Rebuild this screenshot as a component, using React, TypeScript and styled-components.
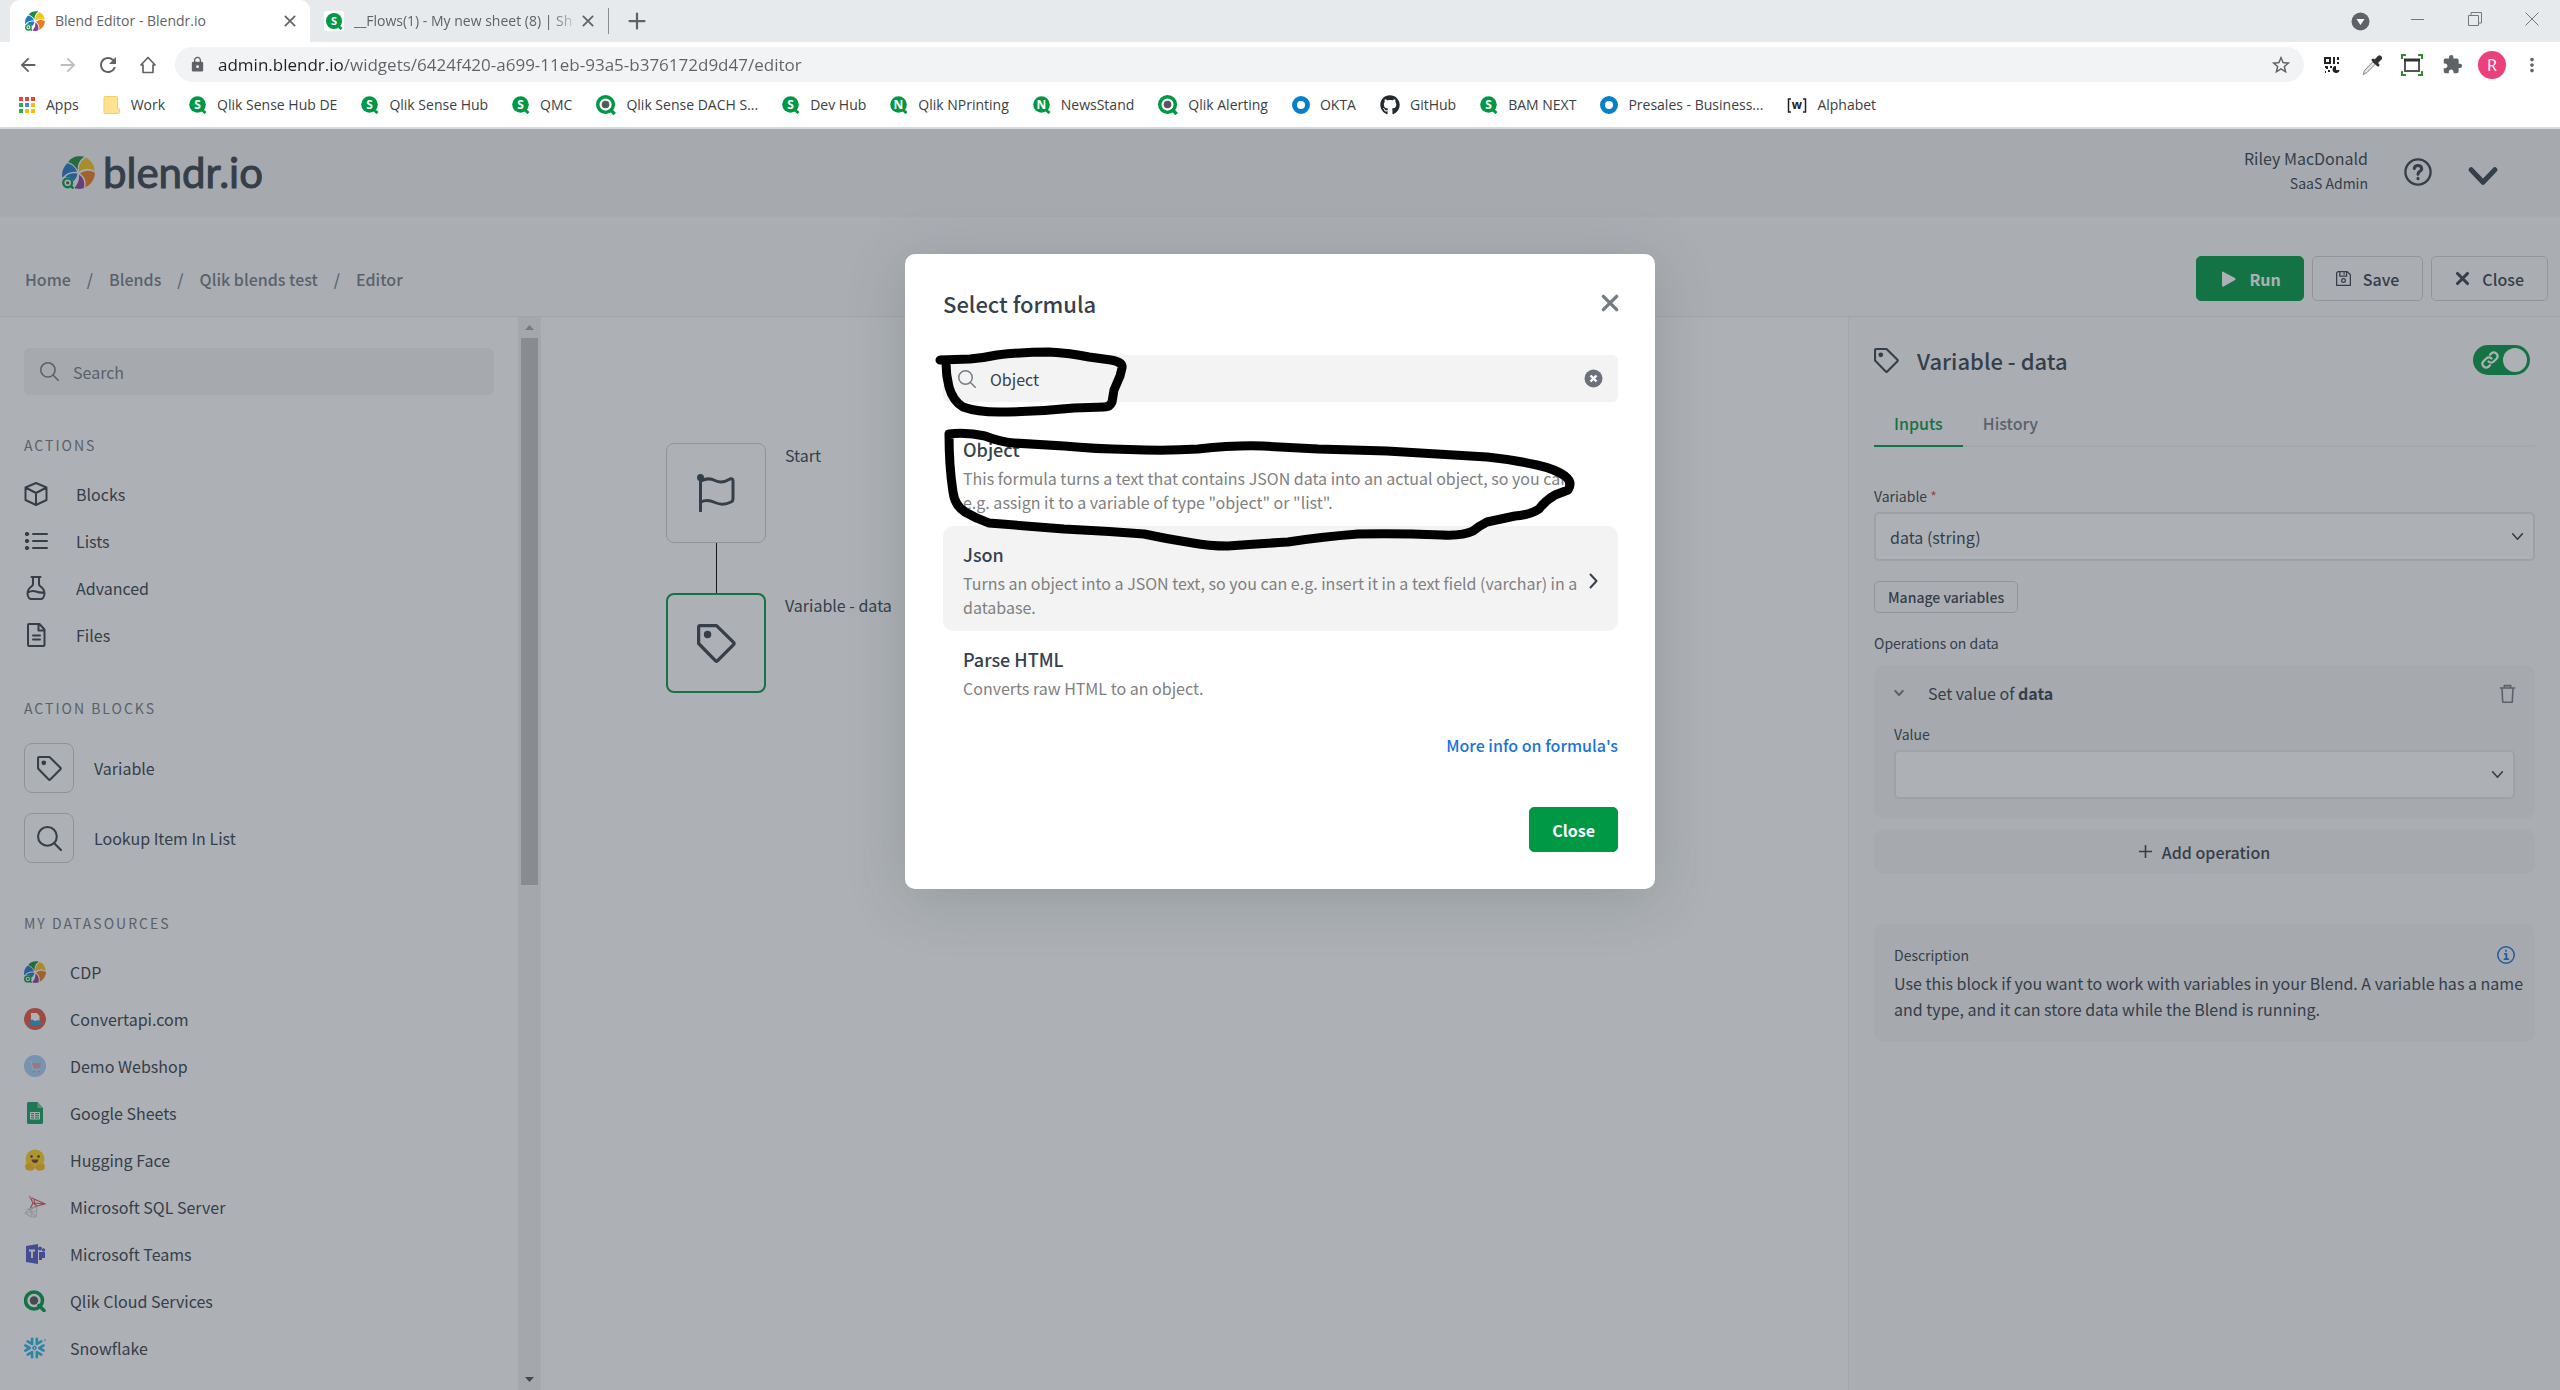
import React from "react";
import styled, { createGlobalStyle, css } from "styled-components";
import { MdArrowBack, MdArrowForward, MdRefresh, MdLock, MdStarBorder, MdExtension, MdMoreVert } from "react-icons/md";
import { FaGithub } from "react-icons/fa";
import { SiSnowflake } from "react-icons/si";

const ui = `"Noto Sans CJK SC", "Noto Sans", sans-serif`;
const chrome = `"Open Sans", "Noto Sans", sans-serif`;
const ink = "#36414c";
const muted = "#757a85";
const green = "#009845";

const Global = createGlobalStyle`
  *, *::before, *::after { box-sizing: border-box; }
  body { margin: 0; background: #fff; }
  button, input, select { font: inherit; color: inherit; margin: 0; }
  a { color: inherit; text-decoration: none; }
  ul { list-style: none; margin: 0; padding: 0; }
  h1, h2, h3, p { margin: 0; font-weight: inherit; font-size: inherit; }
  svg { display: block; flex: none; }
`;

const Page = styled.div`
  height: 100vh;
  display: flex;
  flex-direction: column;
  font-family: ${ui};
  font-size: 16px;
  line-height: 24px;
  color: ${ink};
  overflow: hidden;
`;

/* ---------- Browser window ---------- */

const BrowserTop = styled.header`
  font-family: ${chrome};
  font-size: 14px;
  line-height: 20px;
  color: #3c4043;
  border-bottom: 2px solid #d8dbde;
`;

const TabStrip = styled.div`
  height: 42px;
  display: flex;
  align-items: center;
  padding-left: 10px;
  background: #e6eaed;
`;

const BrowserTab = styled.div<{ $active?: boolean }>`
  height: 42px;
  width: ${(p) => (p.$active ? 300 : 298)}px;
  display: flex;
  align-items: center;
  gap: 10px;
  padding: 0 13px 0 ${(p) => (p.$active ? 15 : 14)}px;
  color: #5f6368;
  background: ${(p) => (p.$active ? "#fff" : "transparent")};
  border-radius: 10px 10px 0 0;
`;

const TabTitle = styled.span<{ $fade?: boolean }>`
  flex: 1;
  white-space: nowrap;
  ${(p) => p.$fade && css`
    margin-right: -8px;
    mask-image: linear-gradient(to right, #000 88%, transparent);
  `}
`;

const PlainButton = styled.button`
  display: grid;
  place-items: center;
  padding: 0;
  border: 0;
  background: none;
  color: inherit;
  cursor: pointer;
`;

const NewTab = styled(PlainButton)`
  width: 56px;
  height: 26px;
  border-left: 1px solid #8a8d91;
  color: #5f6368;
`;

const WindowControls = styled.div`
  margin-left: auto;
  display: flex;
  align-items: center;
  color: #777;
`;

const WindowButton = styled(PlainButton)`
  width: 57px;
  height: 36px;
`;

const AddressRow = styled.div`
  height: 45px;
  display: flex;
  align-items: center;
  padding: 0 8px;
  color: #5f6368;
`;

const NavButton = styled(PlainButton)<{ $dim?: boolean }>`
  width: 40px;
  height: 36px;
  color: ${(p) => (p.$dim ? "#bcbec1" : "#5f6368")};
`;

const AddressBar = styled.label`
  flex: 1;
  height: 35px;
  margin: 0 8px 0 7px;
  padding: 0 12px 0 14px;
  display: flex;
  align-items: center;
  gap: 12px;
  border-radius: 18px;
  background: #f1f3f4;
`;

const AddressInput = styled.input`
  flex: 1;
  min-width: 0;
  border: 0;
  outline: 0;
  padding: 0;
  font-size: 17px;
  line-height: 24px;
  color: #5f6368;
  background: linear-gradient(to right, #202124 126px, #5f6368 126px);
  background-clip: text;
  -webkit-background-clip: text;
  -webkit-text-fill-color: transparent;
`;

const Avatar = styled.span`
  width: 28px;
  height: 28px;
  border-radius: 50%;
  display: grid;
  place-items: center;
  font-size: 16px;
  color: #fff;
  background: #ec407a;
`;

const Bookmarks = styled.nav`
  height: 40px;
  display: flex;
  align-items: center;
  gap: 24px;
  padding: 0 16px 4px;
`;

const Bookmark = styled.a`
  display: flex;
  align-items: center;
  gap: 10px;
  white-space: nowrap;
`;

/* ---------- Application shell ---------- */

const Viewport = styled.div`
  position: relative;
  flex: 1;
  min-height: 0;
  display: flex;
  flex-direction: column;
`;

const AppHeader = styled.header`
  height: 88px;
  display: flex;
  align-items: center;
  padding: 0 62px 2px;
  background: #f4f4f4;
`;

const Logo = styled.a`
  display: flex;
  align-items: center;
  gap: 8px;
  font-family: "Lato", sans-serif;
  font-size: 42px;
  line-height: 44px;
  -webkit-text-stroke: 1px ${ink};
`;

const User = styled.div`
  margin-left: auto;
  padding-bottom: 4px;
  text-align: right;
  font-size: 16px;
  line-height: 25px;
`;

const Small = styled.div`
  font-size: 14px;
  line-height: 24px;
  color: ${ink};
`;

const HelpButton = styled(PlainButton)`
  margin-left: 36px;
`;

const MenuButton = styled(PlainButton)`
  margin: 8px 0 0 36px;
`;

const ActionBar = styled.div`
  height: 100px;
  display: flex;
  align-items: flex-end;
  justify-content: space-between;
  padding: 0 12px 15px 25px;
  border-bottom: 1px solid #e9e9e9;
  background: #fafafa;
`;

const Crumbs = styled.nav`
  height: 45px;
  display: flex;
  align-items: center;
  gap: 16px;
  font-weight: 500;
  color: ${muted};
`;

const Buttons = styled.div`
  display: flex;
  gap: 8px;
`;

const Button = styled.button<{ $primary?: boolean }>`
  height: 45px;
  display: flex;
  align-items: center;
  gap: 12px;
  padding: 0 ${(p) => (p.$primary ? 22 : 23)}px;
  border: 1px solid ${(p) => (p.$primary ? green : "#d3d3d3")};
  border-radius: 5px;
  background: ${(p) => (p.$primary ? green : "transparent")};
  color: ${(p) => (p.$primary ? "#fff" : ink)};
  font-weight: ${(p) => (p.$primary ? 700 : 500)};
  cursor: pointer;
`;

const Workspace = styled.main`
  flex: 1;
  min-height: 0;
  display: grid;
  grid-template-columns: 541px minmax(0, 1fr) 712px;
`;

/* ---------- Sidebar ---------- */

const Sidebar = styled.aside`
  display: flex;
  min-height: 0;
  border-right: 1px solid #f0f0f0;
`;

const SidebarBody = styled.div`
  flex: 1;
  overflow: hidden;
  padding: 31px 24px 0;
`;

const SearchBox = styled.label`
  height: 47px;
  display: flex;
  align-items: center;
  gap: 14px;
  padding: 0 16px;
  border-radius: 6px;
  background: #f3f3f3;
  color: ${muted};
`;

const SearchInput = styled.input`
  flex: 1;
  min-width: 0;
  border: 0;
  outline: 0;
  padding: 0;
  background: none;
  color: ${ink};
  &::placeholder { color: ${muted}; opacity: 1; }
`;

const SectionTitle = styled.h3`
  margin: 40px 0 15px;
  font-size: 14px;
  line-height: 20px;
  letter-spacing: 2px;
  color: ${muted};
`;

const ActionRow = styled.li`
  height: 47px;
  display: flex;
  align-items: center;
  gap: 28px;
`;

const BlockRow = styled(ActionRow)`
  height: 70px;
  gap: 20px;
`;

const SourceRow = styled(ActionRow)`
  gap: 24px;
`;

const BlockTile = styled.span`
  width: 50px;
  height: 50px;
  display: grid;
  place-items: center;
  border: 1px solid #cfcfcf;
  border-radius: 8px;
`;

const ScrollTrack = styled.div`
  width: 22px;
  display: flex;
  flex-direction: column;
  align-items: center;
  background: #f1f1f1;
`;

const ScrollThumb = styled.div`
  width: 17px;
  height: 51%;
  margin-bottom: auto;
  background: #c1c1c1;
`;

const ScrollArrow = styled.div`
  height: 21px;
  display: grid;
  place-items: center;
`;

/* ---------- Canvas ---------- */

const Canvas = styled.section`
  position: relative;
  overflow: hidden;
`;

const Flow = styled.div`
  position: absolute;
  left: 125px;
  top: 126px;
`;

const FlowNode = styled.div`
  display: flex;
  gap: 19px;
`;

const NodeTile = styled.div<{ $selected?: boolean }>`
  width: 100px;
  height: 100px;
  display: grid;
  place-items: center;
  border: ${(p) => (p.$selected ? `2px solid ${green}` : "1px solid #cfcfcf")};
  border-radius: 8px;
`;

const Connector = styled.div`
  width: 1px;
  height: 50px;
  margin-left: 50px;
  background: #000;
`;

/* ---------- Detail panel ---------- */

const Panel = styled.aside`
  padding: 28px 25px 0;
  border-left: 1px solid #f0f0f0;
  background: #fafafa;
`;

const PanelHead = styled.div`
  display: flex;
  align-items: center;
  gap: 18px;
  height: 30px;
  font-size: 22px;
  font-weight: 500;
`;

const Toggle = styled.label`
  margin: 0 5px 0 auto;
  width: 57px;
  height: 30px;
  display: flex;
  align-items: center;
  justify-content: space-between;
  padding: 0 3px 0 8px;
  border-radius: 15px;
  background: ${green};
  color: #fff;
`;

const ToggleInput = styled.input`
  appearance: none;
  margin: 0;
  width: 24px;
  height: 24px;
  border-radius: 50%;
  background: #fff;
`;

const Tabs = styled.div`
  display: flex;
  margin-top: 26px;
  box-shadow: inset 0 -2px #f1f1f1;
`;

const Tab = styled.button<{ $active?: boolean }>`
  height: 46px;
  padding: 0 20px;
  border: 0;
  border-bottom: 2px solid ${(p) => (p.$active ? green : "transparent")};
  background: none;
  font-weight: 500;
  color: ${(p) => (p.$active ? green : muted)};
`;

const FieldLabel = styled.label`
  display: block;
  font-size: 14px;
  line-height: 24px;
`;

const Field = styled.div`
  margin-top: 37px;
`;

const Required = styled.span`
  color: #d9534f;
`;

const SelectWrap = styled.div`
  display: grid;
  align-items: center;
  margin-top: 4px;
  > * { grid-area: 1 / 1; }
  > svg { justify-self: end; margin-right: 11px; pointer-events: none; }
`;

const Select = styled.select`
  appearance: none;
  width: 100%;
  height: 49px;
  padding: 0 14px;
  border: 2px solid #e6e6e6;
  border-radius: 5px;
  background: #fff;
  outline: 0;
`;

const SmallButton = styled.button`
  display: block;
  height: 32px;
  margin: 20px 0 18px;
  padding: 0 13px;
  border: 1px solid #d3d3d3;
  border-radius: 5px;
  background: transparent;
  font-size: 14px;
  line-height: 20px;
  font-weight: 500;
`;

const Card = styled.div`
  margin-top: 10px;
  padding: 16px 20px 20px;
  border-radius: 10px;
  background: #f3f3f3;
`;

const OperationHead = styled.div`
  display: flex;
  align-items: center;
  justify-content: space-between;
  margin-bottom: 17px;
  > button { margin-right: -2px; color: ${muted}; }
`;

const OperationName = styled.span`
  display: flex;
  align-items: center;
  gap: 24px;
  > svg { color: ${muted}; }
`;

const AddButton = styled.button`
  width: 100%;
  height: 45px;
  margin-top: 10px;
  display: flex;
  align-items: center;
  justify-content: center;
  gap: 10px;
  border: 0;
  border-radius: 10px;
  background: #f3f3f3;
  font-weight: 500;
`;

const Description = styled(Card)`
  margin-top: 50px;
  line-height: 26px;
`;

const DescriptionHead = styled.div`
  display: flex;
  align-items: center;
  justify-content: space-between;
  height: 30px;
  color: #1a73d9;
`;

const DescriptionText = styled.p`
  margin-right: -14px;
`;

/* ---------- Dialog ---------- */

const Backdrop = styled.div`
  position: absolute;
  inset: 0;
  display: flex;
  justify-content: center;
  align-items: flex-start;
  padding-top: 125px;
  background: rgba(50, 60, 70, 0.4);
`;

const Dialog = styled.div`
  position: relative;
  width: 750px;
  max-width: 90%;
  padding: 32px 37px 37px 38px;
  border-radius: 10px;
  background: #fff;
  box-shadow: 0 10px 60px rgba(50, 60, 70, 0.2);
`;

const DialogHead = styled.div`
  display: flex;
  align-items: center;
  justify-content: space-between;
  margin-bottom: 35px;
  font-size: 22px;
  line-height: 34px;
  font-weight: 500;
`;

const DialogClose = styled(PlainButton)`
  width: 18px;
  height: 20px;
  color: ${muted};
`;

const DialogSearch = styled(SearchBox)`
  padding: 0 15px;
`;

const FormulaList = styled.ul`
  margin-top: 19px;
`;

const Formula = styled.li<{ $active?: boolean }>`
  display: flex;
  align-items: center;
  justify-content: space-between;
  padding: 16px 20px 12px;
  border-radius: 10px;
  background: ${(p) => (p.$active ? "#f3f3f3" : "transparent")};
`;

const FormulaName = styled.h3`
  font-size: 18px;
  font-weight: 500;
  line-height: 24px;
  margin-bottom: 5px;
`;

const FormulaText = styled.p`
  color: #808080;
  max-width: 622px;
`;

const DialogFoot = styled.div`
  display: flex;
  flex-direction: column;
  align-items: flex-end;
  gap: 50px;
  margin-top: 21px;
`;

const InfoLink = styled.a`
  color: #1a73d9;
  font-weight: 500;
`;

const Ink = styled.svg`
  position: absolute;
  left: 0;
  top: 0;
  pointer-events: none;
`;

/* ---------- Drawings ---------- */

const Stroke = ({ size, d, w = 2, box = 24, children }: { size: number; d?: string; w?: number; box?: number; children?: React.ReactNode }) => (
  <svg width={size} height={size} viewBox={`0 0 ${box} ${box}`} fill="none" stroke="currentColor" strokeWidth={w} strokeLinecap="round" strokeLinejoin="round">
    {d && <path d={d} />}
    {children}
  </svg>
);

const Cross = ({ size, w = 2 }: { size: number; w?: number }) => <Stroke size={size} w={w} d="M4 4 20 20M20 4 4 20" />;
const Search = ({ size, w = 2 }: { size: number; w?: number }) => (
  <Stroke size={size} w={w} d="M17 17 23 23"><circle cx="10" cy="10" r="9" /></Stroke>
);
const Tag = ({ size, w = 2 }: { size: number; w?: number }) => (
  <Stroke size={size} w={w} d="M2 1H12L22.500 11.300Q23.200 12 22.500 12.700L12.700 22.600Q12 23.300 11.300 22.600L1 12V2Q1 1 2 1Z">
    <circle cx="6.500" cy="6.500" r="1.300" fill="currentColor" />
  </Stroke>
);
const Chevron = ({ size, w = 3 }: { size: number; w?: number }) => <Stroke size={size} w={w} d="M3 7 12 17 21 7" />;

const Pinwheel = ({ size }: { size: number }) => (
  <svg width={size} height={size} viewBox="0 0 32 32">
    <path fill="#1f8a3d" d="M6 6C9 1 15 -.5 21.500 .8C17 4 15 8 15.200 14C13 9.500 10 7 6 6Z" />
    <path fill="#f5c518" d="M23 1.500C28.500 4 31.500 9 31.500 14.500C27 11.500 21 11.500 16.500 15.500C15.500 10 18 5 23 1.500Z" />
    <path fill="#ee7a22" d="M32 16.500C31.500 23 28 28 22.500 30.500C24 25 22 20 17.500 17C22 13.500 28 13.500 32 16.500Z" />
    <path fill="#8a3fa0" d="M16.500 18C21 21 22.500 26 21 31.200C17.500 32.300 14 32 12 31C15.500 27 17 23 16.500 18Z" />
    <path fill="#1e78c8" d="M5 7C10 8 13 11 14.500 15.500C9 14.500 4 16.500 .3 21C-.5 15.500 1 11 5 7ZM15 17C14.500 20.500 13 22.500 11 24.500C9 20.500 6 20 3 20.500C6 17 10 16 15 17Z" />
    <circle cx="5.500" cy="26" r="4.300" fill="none" stroke="#009845" strokeWidth="2.200" />
    <circle cx="5.500" cy="26" r="1.600" fill="#54565b" />
    <path d="M8 28.500 11 31.500" stroke="#009845" strokeWidth="2.400" />
  </svg>
);

const SenseIcon = ({ letter = "S" }: { letter?: string }) => (
  <svg width="18" height="18" viewBox="0 0 18 18">
    <circle cx="8.500" cy="8.500" r="8.300" fill="#009845" />
    <path d="M12 13 16.500 17" stroke="#009845" strokeWidth="3" />
    <text x="8.500" y="13" fontSize="12" fontWeight="700" fill="#fff" textAnchor="middle" fontFamily="Open Sans, sans-serif">{letter}</text>
  </svg>
);

const QlikIcon = () => (
  <svg width="20" height="20" viewBox="0 0 22 22">
    <circle cx="10.500" cy="10.500" r="8.600" fill="#fff" stroke="#009845" strokeWidth="3.800" />
    <circle cx="10.500" cy="10.500" r="4.200" fill="#54565b" />
    <path d="M15.500 15.500 20.500 21" stroke="#009845" strokeWidth="3.800" />
  </svg>
);

const QlikDot = () => (
  <svg width="22" height="22" viewBox="0 0 22 22">
    <circle cx="10" cy="10.500" r="8.500" fill="none" stroke="#009845" strokeWidth="3.600" />
    <circle cx="10" cy="10.500" r="4.200" fill="#54565b" />
    <path d="M15 15.500 20 20.500" stroke="#009845" strokeWidth="3.600" strokeLinecap="round" />
  </svg>
);

const Ring = () => (
  <svg width="18" height="18" viewBox="0 0 18 18"><circle cx="9" cy="9" r="6.500" fill="none" stroke="#0a7fc9" strokeWidth="5" /></svg>
);

const AppsIcon = () => (
  <svg width="20" height="18" viewBox="0 0 20 18">
    {["#ea4335", "#ea4335", "#ea4335", "#34a853", "#4285f4", "#fbbc04", "#34a853", "#fbbc04", "#fbbc04"].map((c, i) => (
      <rect key={i} x={3 + (i % 3) * 6} y={1 + Math.floor(i / 3) * 6} width="4" height="4" fill={c} />
    ))}
  </svg>
);

const FolderIcon = () => (
  <svg width="18" height="18" viewBox="0 0 18 18">
    <path d="M1 1.500Q1 .5 2 .5H13.500Q14.500 .5 14.500 1.500V11.500L16.500 13V16.500Q16.500 17.500 15.500 17.500H2Q1 17.500 1 16.500Z" fill="#ffe28f" stroke="#f3d06c" />
  </svg>
);

const AlphabetIcon = () => (
  <svg width="20" height="18" viewBox="0 0 20 18">
    <path d="M4 3H1.500V16H4M16 3H18.500V16H16" fill="none" stroke="#222" strokeWidth="1.500" />
    <text x="10" y="13" fontSize="12" fontWeight="700" fill="#222" textAnchor="middle" fontFamily="Open Sans, sans-serif">w</text>
  </svg>
);

const bookmarks: [string, React.ReactNode][] = [
  ["Apps", <AppsIcon />],
  ["Work", <FolderIcon />],
  ["Qlik Sense Hub DE", <SenseIcon />],
  ["Qlik Sense Hub", <SenseIcon />],
  ["QMC", <SenseIcon />],
  ["Qlik Sense DACH S...", <QlikIcon />],
  ["Dev Hub", <SenseIcon />],
  ["Qlik NPrinting", <SenseIcon letter="N" />],
  ["NewsStand", <SenseIcon letter="N" />],
  ["Qlik Alerting", <QlikIcon />],
  ["OKTA", <Ring />],
  ["GitHub", <FaGithub size={20} color="#24292e" />],
  ["BAM NEXT", <SenseIcon />],
  ["Presales - Business...", <Ring />],
  ["Alphabet", <AlphabetIcon />],
];

const actions: [string, React.ReactNode][] = [
  ["Blocks", <Stroke size={24} w={2} d="M12 1 22.500 5.500V18L12 23 1.500 18V5.500ZM1.500 5.500 12 11 22.500 5.500M12 11V23" />],
  ["Lists", (
    <Stroke size={24} w={2} d="M9 5H23M9 12H23M9 19H23">
      <g strokeWidth="1"><circle cx="3" cy="5" r="1.700" fill="currentColor" /><circle cx="3" cy="12" r="1.700" fill="currentColor" /><circle cx="3" cy="19" r="1.700" fill="currentColor" /></g>
    </Stroke>
  )],
  ["Advanced", <Stroke size={24} w={2} d="M7.500 1H16.500M9 1V8Q9 9 8 10Q3.500 13 3.500 17.500Q3.500 20 5 22Q6 23 7 23H17Q18 23 19 22Q20.500 20 20.500 17.500Q20.500 13 16 10Q15 9 15 8V1M4 16.500Q8 14 12 15.500T20 16.500" />],
  ["Files", <Stroke size={24} w={2} d="M5 1H15.500L20.500 6.500V22Q20.500 23 19.500 23H5Q4 23 4 22V2Q4 1 5 1ZM14.500 1.500V7.500H20M9 12.500H16M9 16.500H16" />],
];

const sources: [string, React.ReactNode][] = [
  ["CDP", <Pinwheel size={22} />],
  ["Convertapi.com", (
    <svg width="22" height="22" viewBox="0 0 22 22">
      <circle cx="11" cy="11" r="11" fill="#e8543f" />
      <path d="M7 5H13L15.500 8V13H7Z" fill="#fff" />
      <path d="M5 17V14L8 11.500 11 13 15 12 17 15V17Z" fill="#2a9fd6" />
    </svg>
  )],
  ["Demo Webshop", (
    <svg width="22" height="22" viewBox="0 0 22 22">
      <circle cx="11" cy="11" r="11" fill="#a3cdfb" />
      <path d="M8 8H17L16 13H9Z" fill="#ec9c9c" />
      <path d="M5 6H7L9 15H16" fill="none" stroke="#d5dbe5" strokeWidth="1.200" />
      <circle cx="10" cy="16.500" r="1" fill="#e58d8d" /><circle cx="15" cy="16.500" r="1" fill="#e58d8d" />
    </svg>
  )],
  ["Google Sheets", (
    <svg width="22" height="22" viewBox="0 0 22 22">
      <path d="M4.500 0H13.500L19 6V20.500Q19 22 17.500 22H4.500Q3 22 3 20.500V1.500Q3 0 4.500 0Z" fill="#12a05c" />
      <path d="M13.500 0 19 6H13.500Z" fill="#7cc9a0" />
      <path d="M6.500 10.500H15.500V17H6.500ZM6.500 12.700H15.500M6.500 14.900H15.500M10.500 10.500V17" fill="none" stroke="#fff" />
    </svg>
  )],
  ["Hugging Face", (
    <svg width="22" height="22" viewBox="0 0 22 22">
      <circle cx="11" cy="10" r="9.500" fill="#ffd21e" />
      <path d="M1 17Q2 13 6 15Q10 16 10.500 20Q8 23 3 21Q1 20 1 17ZM21 17Q20 13 16 15Q12 16 11.500 20Q14 23 19 21Q21 20 21 17Z" fill="#ffb91a" />
      <circle cx="7.500" cy="7.500" r="1.300" fill="#3a3b45" /><circle cx="14.500" cy="7.500" r="1.300" fill="#3a3b45" />
      <path d="M7.500 10.500H14.500Q14 14 11 14T7.500 10.500Z" fill="#7a3b2e" />
    </svg>
  )],
  ["Microsoft SQL Server", (
    <svg width="22" height="22" viewBox="0 0 22 22" fill="none" strokeWidth="1.200">
      <path d="M6 1 10 3 21 8 13 10 6 13 9 7ZM10 3 11 9M9 7 21 8M13 10 9 7" stroke="#d9545c" />
      <path d="M5 2 9 1M4 13 13 11 12 21 7 21 1 17ZM4 13 12 21M1 17 13 15M7 21 8 12" stroke="#d3d6da" />
    </svg>
  )],
  ["Microsoft Teams", (
    <svg width="22" height="22" viewBox="0 0 22 22">
      <path d="M2 3 14 1V21L2 19Z" fill="#5059c9" />
      <path d="M5 7.500H11M8 7.500V15" stroke="#fff" strokeWidth="1.800" />
      <circle cx="16" cy="5.500" r="2" fill="#5059c9" /><circle cx="19.500" cy="7" r="1.700" fill="#5059c9" />
      <path d="M15 9H21V15H18V17H15Z" fill="#5059c9" />
    </svg>
  )],
  ["Qlik Cloud Services", <QlikDot />],
  ["Snowflake", <SiSnowflake size={22} color="#29b5e8" />],
];

const crumbs = ["Home", "Blends", "Qlik blends test", "Editor"];

const formulas = [
  { name: "Object", text: 'This formula turns a text that contains JSON data into an actual object, so you can e.g. assign it to a variable of type "object" or "list".' },
  { name: "Json", text: "Turns an object into a JSON text, so you can e.g. insert it in a text field (varchar) in a database.", active: true },
  { name: "Parse HTML", text: "Converts raw HTML to an object." },
];

function Browser() {
  return (
    <BrowserTop>
      <TabStrip>
        <BrowserTab $active>
          <Pinwheel size={20} />
          <TabTitle>Blend Editor - Blendr.io</TabTitle>
          <PlainButton aria-label="Close tab"><Cross size={14} w={3} /></PlainButton>
        </BrowserTab>
        <BrowserTab>
          <svg width="20" height="20" viewBox="0 0 20 20">
            <rect width="20" height="20" rx="2" fill="#fff" />
            <circle cx="10" cy="10" r="8" fill="#009845" />
            <path d="M13 14 17.500 18" stroke="#009845" strokeWidth="3" />
            <text x="10" y="14" fontSize="11" fontWeight="700" fill="#fff" textAnchor="middle" fontFamily="Open Sans, sans-serif">S</text>
          </svg>
          <TabTitle $fade>__Flows(1) - My new sheet (8) | Sh</TabTitle>
          <PlainButton aria-label="Close tab"><Cross size={14} w={3} /></PlainButton>
        </BrowserTab>
        <NewTab aria-label="New tab"><Stroke size={18} w={3} d="M12 2V22M2 12H22" /></NewTab>
        <WindowControls>
          <WindowButton aria-label="Search tabs">
            <svg width="19" height="19" viewBox="0 0 19 19"><circle cx="9.500" cy="9.500" r="9" fill="#5f6368" /><path d="M5.500 7H13.500L9.500 13Z" fill="#fff" /></svg>
          </WindowButton>
          <WindowButton aria-label="Minimize"><svg width="13" height="13" viewBox="0 0 13 13"><path d="M0 4.500H13" stroke="currentColor" /></svg></WindowButton>
          <WindowButton aria-label="Restore"><svg width="14" height="18" viewBox="0 0 14 18" fill="none" stroke="currentColor"><path d="M.5 3.500H10.500V13.500H.5ZM3 3V.5H13.500V11H11" /></svg></WindowButton>
          <WindowButton aria-label="Close window"><svg width="14" height="18" viewBox="0 0 14 18"><path d="M.5 .5 13.500 13.500M13.500 .5 .5 13.500" stroke="currentColor" /></svg></WindowButton>
        </WindowControls>
      </TabStrip>
      <AddressRow>
        <NavButton aria-label="Back"><MdArrowBack size={22} /></NavButton>
        <NavButton aria-label="Forward" $dim><MdArrowForward size={22} /></NavButton>
        <NavButton aria-label="Reload"><MdRefresh size={24} /></NavButton>
        <NavButton aria-label="Home page"><Stroke size={20} w={2} d="M6 21V12H3.500L12 3 20.500 12H18V21Z" /></NavButton>
        <AddressBar>
          <MdLock size={17} />
          <AddressInput aria-label="Address" defaultValue="admin.blendr.io/widgets/6424f420-a699-11eb-93a5-b376172d9d47/editor" />
          <MdStarBorder size={22} />
        </AddressBar>
        <NavButton aria-label="QR code">
          <svg width="20" height="20" viewBox="0 0 20 20">
            <path d="M3 3H8V8H3ZM12 2V9M16 2V5M15 8H17M3 12H5V14M9 11V13M6 16H8M3 17H4" fill="none" stroke="#222" strokeWidth="2" />
            <path d="M14 11A3.500 3.500 0 1 0 17.500 15H14Z" fill="#222" />
          </svg>
        </NavButton>
        <NavButton aria-label="Colour picker">
          <svg width="22" height="22" viewBox="0 0 22 22"><path d="M2 20.500 3.500 16.500 12 7.500 14.500 10 6 18.500Z" fill="#e2e2e2" stroke="#888" /><path d="M12 6 17 11" stroke="#333" strokeWidth="3" strokeLinecap="round" /><path d="M15 7.500 18.500 4" stroke="#333" strokeWidth="5" strokeLinecap="round" /></svg>
        </NavButton>
        <NavButton aria-label="Capture">
          <svg width="22" height="22" viewBox="0 0 22 22" fill="none"><path d="M4 5V17H18V5" stroke="#555" strokeWidth="2" /><path d="M3 6H19" stroke="#333" strokeWidth="3" /><path d="M1 5V1H5M17 1H21V5M21 17V21H17M5 21H1V17" stroke="#2e8b2e" strokeWidth="2" /></svg>
        </NavButton>
        <NavButton aria-label="Extensions"><MdExtension size={21} /></NavButton>
        <NavButton aria-label="Profile"><Avatar>R</Avatar></NavButton>
        <NavButton aria-label="Menu"><MdMoreVert size={22} /></NavButton>
      </AddressRow>
      <Bookmarks>
        {bookmarks.map(([name, icon]) => <Bookmark key={name} href="#">{icon}{name}</Bookmark>)}
      </Bookmarks>
    </BrowserTop>
  );
}

function LeftPanel() {
  return (
    <Sidebar>
      <SidebarBody>
        <SearchBox><Search size={19} /><SearchInput aria-label="Search" placeholder="Search" /></SearchBox>
        <SectionTitle>ACTIONS</SectionTitle>
        <ul>{actions.map(([name, icon]) => <ActionRow key={name}>{icon}{name}</ActionRow>)}</ul>
        <SectionTitle>ACTION BLOCKS</SectionTitle>
        <ul>
          <BlockRow><BlockTile><Tag size={25} /></BlockTile>Variable</BlockRow>
          <BlockRow><BlockTile><Search size={25} /></BlockTile>Lookup Item In List</BlockRow>
        </ul>
        <SectionTitle>MY DATASOURCES</SectionTitle>
        <ul>{sources.map(([name, icon]) => <SourceRow key={name}>{icon}{name}</SourceRow>)}</ul>
      </SidebarBody>
      <ScrollTrack>
        <ScrollArrow><svg width="9" height="5" viewBox="0 0 9 5"><path d="M0 5 4.500 0 9 5Z" fill="#a3a3a3" /></svg></ScrollArrow>
        <ScrollThumb />
        <ScrollArrow><svg width="9" height="5" viewBox="0 0 9 5"><path d="M0 0 4.500 5 9 0Z" fill="#505050" /></svg></ScrollArrow>
      </ScrollTrack>
    </Sidebar>
  );
}

function FlowCanvas() {
  return (
    <Canvas>
      <Flow>
        <FlowNode>
          <NodeTile>
            <Stroke size={38} w={3} box={38} d="M3.500 4V37M4 7Q11 3 18 6.500T33 5Q36 4 36 7V25Q36 27 34 28Q26 32 18 28.500T4 28">
              <circle cx="3.500" cy="3.500" r="2" fill="currentColor" />
            </Stroke>
          </NodeTile>
          Start
        </FlowNode>
        <Connector />
        <FlowNode>
          <NodeTile $selected><Tag size={39} /></NodeTile>
          Variable - data
        </FlowNode>
      </Flow>
    </Canvas>
  );
}

function DetailPanel() {
  return (
    <Panel>
      <PanelHead>
        <Tag size={25} />
        <h2>Variable - data</h2>
        <Toggle>
          <Stroke size={18} w={3} d="M10 14a5 5 0 0 0 7 0l4-4a5 5 0 0 0-7-7l-2 2M14 10a5 5 0 0 0-7 0l-4 4a5 5 0 0 0 7 7l2-2" />
          <ToggleInput type="checkbox" defaultChecked aria-label="Block enabled" />
        </Toggle>
      </PanelHead>
      <Tabs>
        <Tab $active>Inputs</Tab>
        <Tab>History</Tab>
      </Tabs>
      <Field>
        <FieldLabel htmlFor="variable">Variable <Required>*</Required></FieldLabel>
        <SelectWrap>
          <Select id="variable"><option>data (string)</option></Select>
          <Chevron size={13} />
        </SelectWrap>
      </Field>
      <SmallButton>Manage variables</SmallButton>
      <Small>Operations on data</Small>
      <Card>
        <OperationHead>
          <OperationName><Chevron size={10} w={5} /><span>Set value of <b>data</b></span></OperationName>
          <PlainButton aria-label="Delete operation">
            <Stroke size={19} w={2} d="M3 5H21M8 5V2H16V5M5 5 6 23H18L19 5" />
          </PlainButton>
        </OperationHead>
        <FieldLabel htmlFor="value">Value</FieldLabel>
        <SelectWrap>
          <Select id="value"><option></option></Select>
          <Chevron size={13} />
        </SelectWrap>
      </Card>
      <AddButton><Stroke size={13} w={3} d="M12 1V23M1 12H23" />Add operation</AddButton>
      <Description>
        <DescriptionHead>
          <Small>Description</Small>
          <Stroke size={18} w={2}>
            <circle cx="12" cy="12" r="11" /><path d="M10.500 10.500H12.500V17M10 17.500H15M12 6V6.500" strokeWidth="2.500" />
          </Stroke>
        </DescriptionHead>
        <DescriptionText>Use this block if you want to work with variables in your Blend. A variable has a name and type, and it can store data while the Blend is running.</DescriptionText>
      </Description>
    </Panel>
  );
}

function FormulaDialog() {
  return (
    <Backdrop>
      <Dialog role="dialog" aria-label="Select formula">
        <DialogHead>
          <h2>Select formula</h2>
          <DialogClose aria-label="Dismiss"><Cross size={20} w={4} /></DialogClose>
        </DialogHead>
        <DialogSearch>
          <Search size={18} />
          <SearchInput aria-label="Search formula" defaultValue="Object" />
          <svg width="19" height="19" viewBox="0 0 19 19"><circle cx="9.500" cy="9.500" r="9" fill="#6b707c" /><path d="M6.500 6.500 12.500 12.500M12.500 6.500 6.500 12.500" stroke="#fff" strokeWidth="2.400" /></svg>
        </DialogSearch>
        <FormulaList>
          {formulas.map((f) => (
            <Formula key={f.name} $active={f.active}>
              <div>
                <FormulaName>{f.name}</FormulaName>
                <FormulaText>{f.text}</FormulaText>
              </div>
              {f.active && (
                <svg width="9" height="16" viewBox="0 0 9 16" fill="none" stroke="currentColor" strokeWidth="2" strokeLinecap="round" strokeLinejoin="round"><path d="M1.500 1.500 7.500 8 1.500 14.500" /></svg>
              )}
            </Formula>
          ))}
        </FormulaList>
        <DialogFoot>
          <InfoLink href="#">More info on formula's</InfoLink>
          <Button $primary>Close</Button>
        </DialogFoot>
        <Ink width="690" height="320" viewBox="0 0 690 320" fill="none" stroke="#000" strokeWidth="9" strokeLinecap="round" strokeLinejoin="round">
          <path d="M35 106 65 105Q78 104 92 101Q118 98 144 98Q165 99 184 103L206 106Q218 108 217 114L215 122 209 136 207 148Q205 153 199 153L169 154Q130 158 94 158Q72 158 58 153Q48 147 44 133Q41 121 41 109" />
          <path d="M44 180Q62 178 80 182Q95 188 109 189L159 192Q190 195 224 195.500Q262 197 293 195Q330 191 358 192L413 195 482 197 582 203Q610 206 632 211Q650 215 660 222Q668 228 663 236L650 241Q641 246 634 255Q625 261 610 262L582 268Q574 272 568 277Q558 282 537 281Q490 279 453 280Q415 283 383 288Q350 290 323 292Q303 292 288 289Q262 285 239 280Q200 277 159 275Q120 272 84 269Q72 265 60 258Q50 252 48 238Q44 212 44 180Z" />
        </Ink>
      </Dialog>
    </Backdrop>
  );
}

export default function App() {
  return (
    <Page>
      <Global />
      <Browser />
      <Viewport>
        <AppHeader>
          <Logo href="#"><Pinwheel size={33} />blendr.io</Logo>
          <User>Riley MacDonald<Small>SaaS Admin</Small></User>
          <HelpButton aria-label="Help">
            <Stroke size={28} w={2}>
              <circle cx="12" cy="12" r="10.800" />
              <path d="M8.800 9Q9.200 6.500 12 6.500T15.200 9.200Q15.200 10.700 13.500 11.500Q12 12.300 12 14M12 17.300V17.800" strokeWidth="2.600" />
            </Stroke>
          </HelpButton>
          <MenuButton aria-label="Account menu"><Stroke size={30} w={4} d="M2.500 7 12 17 21.500 7" /></MenuButton>
        </AppHeader>
        <ActionBar>
          <Crumbs>
            {crumbs.map((c, i) => (
              <React.Fragment key={c}>
                {i > 0 && <span>/</span>}
                <a href="#">{c}</a>
              </React.Fragment>
            ))}
          </Crumbs>
          <Buttons>
            <Button $primary><svg width="18" height="18" viewBox="0 0 18 18"><path d="M3 2.500Q3 1 4.500 2L16 8Q17.500 9 16 10L4.500 16.500Q3 17 3 15.500Z" fill="#fff" /></svg>Run</Button>
            <Button><Stroke size={15} w={2} d="M3 1H18L23 6V23H1V3ZM6 1V8H17V1M13 3V5"><circle cx="12" cy="15" r="3" /></Stroke>Save</Button>
            <Button><Cross size={15} w={5} />Close</Button>
          </Buttons>
        </ActionBar>
        <Workspace>
          <LeftPanel />
          <FlowCanvas />
          <DetailPanel />
        </Workspace>
        <FormulaDialog />
      </Viewport>
    </Page>
  );
}
